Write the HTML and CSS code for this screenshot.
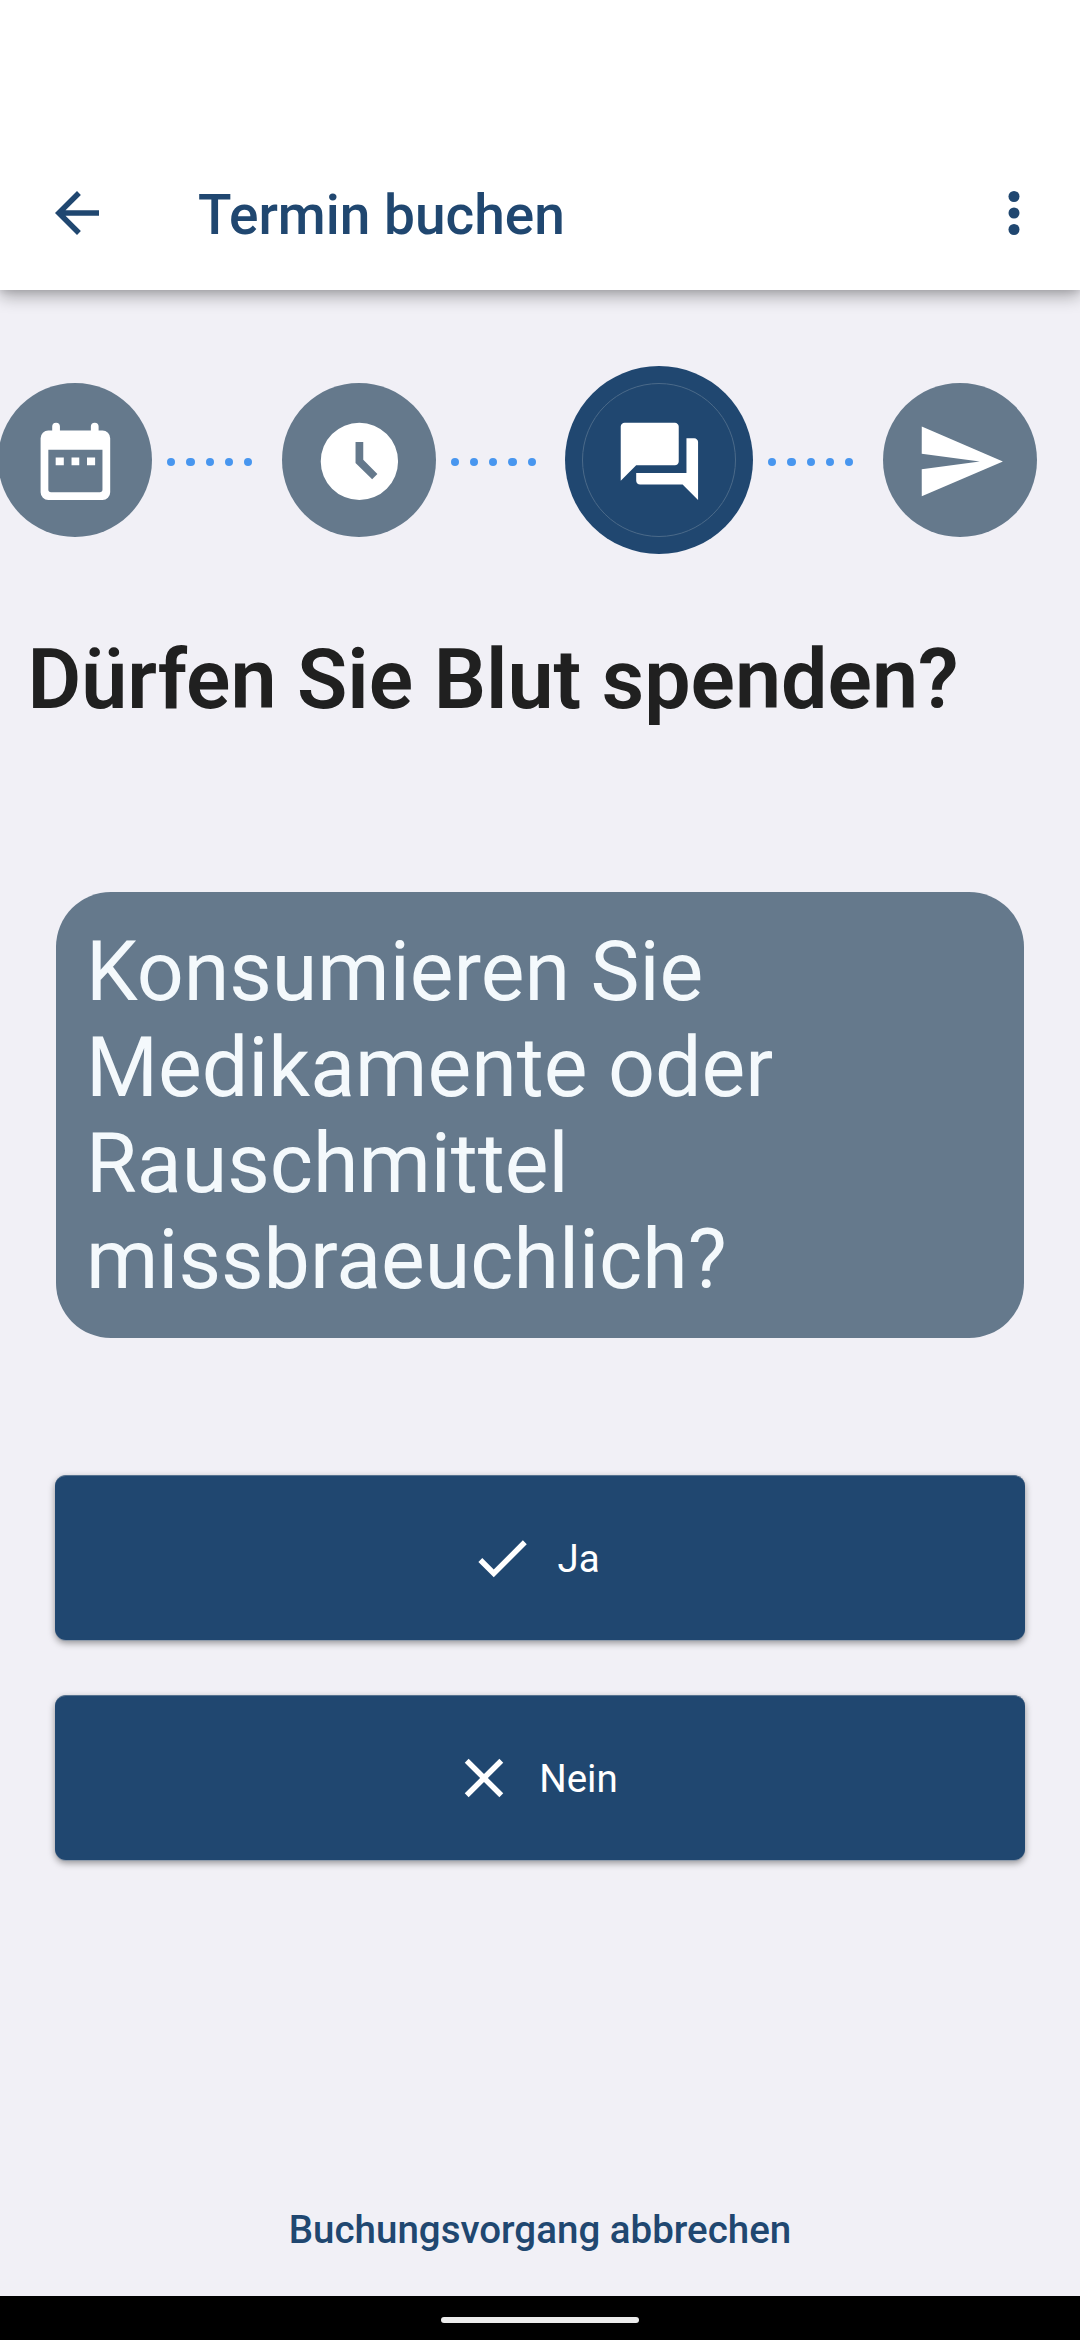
FILE: index.html
```html
<!DOCTYPE html>
<html lang="de">
<head>
<meta charset="utf-8">
<title>Termin buchen</title>
<link rel="stylesheet" href="styles.css">
</head>
<body>
<div class="screen">
  <header class="app-bar">
    <svg class="icon" viewBox="0 0 24 24"><path d="M20 11H7.83l5.59-5.59L12 4l-8 8 8 8 1.41-1.41L7.83 13H20v-2z"/></svg>
    <h1 class="app-title">Termin buchen</h1>
    <svg class="icon" viewBox="0 0 24 24"><circle cx="12" cy="6" r="2"/><circle cx="12" cy="12" r="2"/><circle cx="12" cy="18" r="2"/></svg>
  </header>
  <main class="content">
    <div class="stepper">
      <div class="step">
        <svg class="step-icon" viewBox="0 0 24 24"><path fill-rule="evenodd" d="M5 4h14a2 2 0 0 1 2 2v14a2 2 0 0 1-2 2H5a2 2 0 0 1-2-2V6a2 2 0 0 1 2-2zM5 9v10.3a.7.7 0 0 0 .7.7h12.6a.7.7 0 0 0 .7-.7V9z"/><path d="M6 5V3a1 1 0 0 1 2 0v2zM16 5V3a1 1 0 0 1 2 0v2zM6.9 11H9v2H6.9zM11 11h2v2h-2zM15 11h2.1v2H15z"/></svg>
      </div>
      <div class="dots"><i></i><i></i><i></i><i></i><i></i></div>
      <div class="step">
        <svg class="step-icon" viewBox="0 0 24 24"><path fill-rule="evenodd" d="M12 2a10 10 0 1 0 0 20 10 10 0 0 0 0-20zM11 7h2v4.6l3.65 3.65-1.35 1.35L11 12.4z"/></svg>
      </div>
      <div class="dots"><i></i><i></i><i></i><i></i><i></i></div>
      <div class="step-ring">
        <div class="step step-active">
          <svg class="step-icon" viewBox="0 0 24 24"><path d="M21 6h-2v9H6v2c0 .55.45 1 1 1h11l4 4V7c0-.55-.45-1-1-1zm-4 6V3c0-.55-.45-1-1-1H3c-.55 0-1 .45-1 1v14l4-4h10c.55 0 1-.45 1-1z"/></svg>
        </div>
      </div>
      <div class="dots"><i></i><i></i><i></i><i></i><i></i></div>
      <div class="step">
        <svg class="step-icon" viewBox="0 0 24 24"><path d="M2.01 21L23 12 2.01 3 2 10l15 2-15 2z"/></svg>
      </div>
    </div>
    <h2 class="heading">Dürfen Sie Blut spenden?</h2>
    <p class="question">Konsumieren Sie Medikamente oder Rauschmittel missbraeuchlich?</p>
    <div class="answers">
      <button class="answer" type="button">
        <svg class="icon" viewBox="0 0 24 24"><path d="M9 16.17L4.83 12l-1.42 1.41L9 19 21 7l-1.41-1.41z"/></svg>
        <span class="answer-label">Ja</span>
      </button>
      <button class="answer" type="button">
        <svg class="icon" viewBox="0 0 24 24"><path d="M19 6.41L17.59 5 12 10.59 6.41 5 5 6.41 10.59 12 5 17.59 6.41 19 12 13.41 17.59 19 19 17.59 13.41 12z"/></svg>
        <span class="answer-label">Nein</span>
      </button>
    </div>
    <button class="cancel" type="button">Buchungsvorgang abbrechen</button>
  </main>
  <footer class="nav-bar"><div class="nav-handle"></div></footer>
</div>
</body>
</html>
```
FILE: styles.css
```css
* {
  box-sizing: border-box;
}

body {
  margin: 0;
  font-family: Roboto, sans-serif;
  background: #f1f0f6;
}

button {
  border: 0;
  font-family: inherit;
}

.screen {
  display: flex;
  flex-direction: column;
  width: 1080px;
  height: 2340px;
  overflow: hidden;
}

.icon {
  flex: none;
  width: 66px;
  height: 66px;
  fill: currentColor;
}

.app-bar {
  display: flex;
  align-items: center;
  height: 290px;
  padding: 136px 33px 0 44px;
  color: #204770;
  background: #fff;
  box-shadow: 0 6px 16px rgba(0, 0, 0, 0.32), 0 2px 6px rgba(0, 0, 0, 0.08);
}

.app-title {
  flex: 1;
  margin: 0;
  padding: 4px 0 0 88px;
  font-size: 55px;
  font-weight: 500;
  line-height: 64px;
}

.content {
  display: flex;
  flex: 1;
  flex-direction: column;
}

.stepper {
  display: flex;
  align-items: center;
  height: 188px;
  margin: 76px 0 0 -2px;
}

.step {
  display: flex;
  flex: none;
  align-items: center;
  justify-content: center;
  width: 154px;
  height: 154px;
  padding: 3px 0 0 1px;
  border-radius: 50%;
  background: #65798c;
}

.step-ring {
  display: flex;
  flex: none;
  align-items: center;
  justify-content: center;
  width: 188px;
  height: 188px;
  border-radius: 50%;
  background: #204770;
}

.step-active {
  border: 1px solid #4b6a89;
  background: #204770;
}

.step-icon {
  flex: none;
  width: 92.8px;
  height: 92.8px;
  fill: #fff;
}

.dots {
  display: flex;
  flex: none;
  gap: 11px;
  width: 129.5px;
  padding: 4px 0 0 15px;
}

.dots i {
  width: 8.25px;
  height: 8.25px;
  border-radius: 50%;
  background: #4896ef;
}

.heading {
  margin: 78px 0 0 27.5px;
  color: #202020;
  font-size: 82.5px;
  font-weight: 600;
  line-height: 96px;
}

.question {
  height: 446px;
  margin: 164px 56px 0;
  padding: 32px 30px 0;
  border-radius: 55px;
  color: #f4f9fc;
  background: #65798c;
  font-size: 82.5px;
  line-height: 96px;
}

.answers {
  display: flex;
  flex-direction: column;
  gap: 55px;
  margin: 137px 55px 0;
}

.answer {
  display: flex;
  align-items: center;
  justify-content: center;
  gap: 22px;
  height: 165px;
  padding: 0 11px 0 0;
  border-top: 1px solid #56728f;
  border-radius: 11px;
  color: #fff;
  background: #204770;
  box-shadow: 0 1px 0 #8e9aaa, 0 3px 7px rgba(0, 0, 0, 0.4);
  font-size: 38.5px;
  line-height: 46px;
}

.answer-label {
  padding-top: 2px;
}

.cancel {
  margin: auto 0 40px;
  padding: 0;
  color: #204770;
  background: none;
  font-size: 38.5px;
  font-weight: 500;
  line-height: 52px;
}

.nav-bar {
  display: flex;
  flex: none;
  justify-content: center;
  height: 44px;
  padding-top: 21px;
  background: #000;
}

.nav-handle {
  width: 198px;
  height: 6px;
  border-radius: 3px;
  background: #ececec;
}
```
